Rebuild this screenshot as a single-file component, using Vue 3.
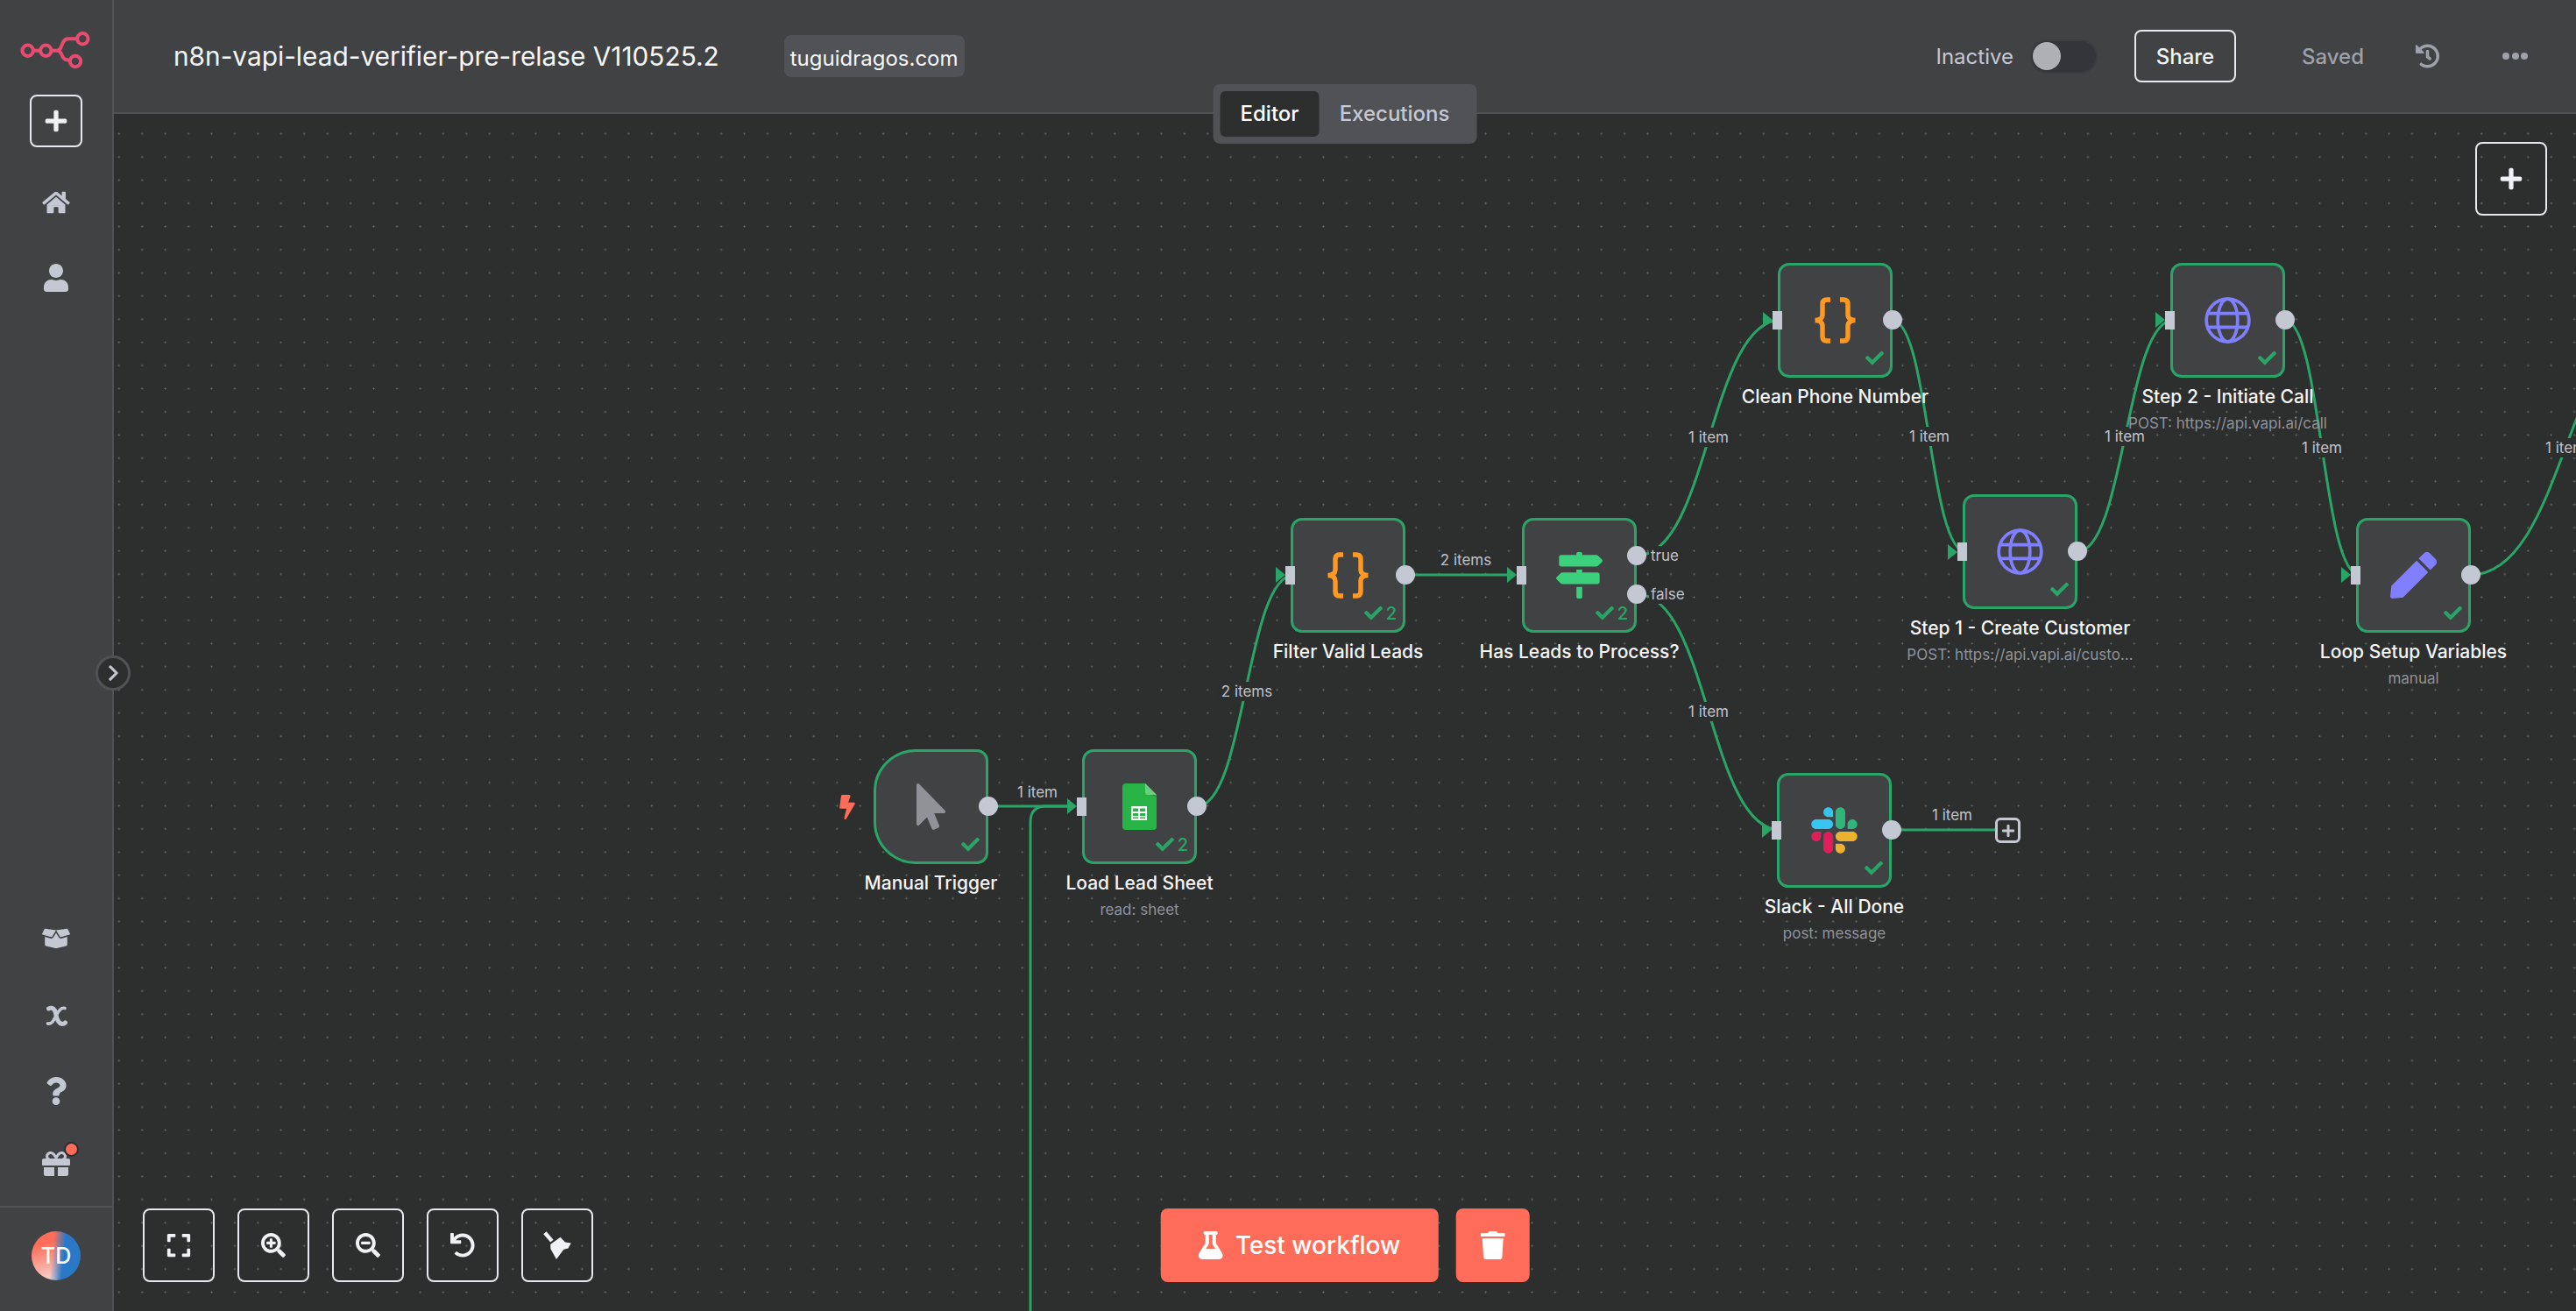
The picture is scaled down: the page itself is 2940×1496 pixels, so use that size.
<script setup>
import { h } from 'vue'

// font awesome solid paths, the broom is redrawn to match the tidy up button
const fa = {
  plus: ['0 0 448 512', 'M416 208H272V64c0-17.67-14.33-32-32-32h-32c-17.67 0-32 14.33-32 32v144H32c-17.67 0-32 14.33-32 32v32c0 17.67 14.33 32 32 32h144v144c0 17.67 14.33 32 32 32h32c17.67 0 32-14.33 32-32V304h144c17.67 0 32-14.33 32-32v-32c0-17.67-14.33-32-32-32z'],
  home: ['0 0 576 512', 'M280.37 148.26L96 300.11V464a16 16 0 0 0 16 16l112.06-.29a16 16 0 0 0 15.92-16V368a16 16 0 0 1 16-16h64a16 16 0 0 1 16 16v95.64a16 16 0 0 0 16 16.05L464 480a16 16 0 0 0 16-16V300L295.67 148.26a12.19 12.19 0 0 0-15.3 0zM571.6 251.47L488 182.56V44.05a12 12 0 0 0-12-12h-56a12 12 0 0 0-12 12v72.61L318.47 43a48 48 0 0 0-61 0L4.34 251.47a12 12 0 0 0-1.6 16.9l25.5 31A12 12 0 0 0 45.15 301l235.22-193.74a12.19 12.19 0 0 1 15.3 0L530.9 301a12 12 0 0 0 16.9-1.6l25.5-31a12 12 0 0 0-1.7-16.93z'],
  user: ['0 0 448 512', 'M224 256c70.7 0 128-57.3 128-128S294.7 0 224 0 96 57.3 96 128s57.3 128 128 128zm89.6 32h-16.7c-22.2 10.2-46.9 16-72.9 16s-50.6-5.8-72.9-16h-16.7C60.2 288 0 348.2 0 422.4V464c0 26.5 21.5 48 48 48h352c26.5 0 48-21.5 48-48v-41.6c0-74.2-60.2-134.4-134.4-134.4z'],
  box: ['0 0 640 512', 'M425.7 256c-16.9 0-32.8-9-41.4-23.4L320 126l-64.2 106.6c-8.7 14.5-24.6 23.5-41.5 23.5-4.5 0-9-.6-13.3-1.9L64 215v178c0 14.7 10 27.5 24.2 31l216.2 54.1c10.2 2.5 20.9 2.5 31 0L551.8 424c14.2-3.6 24.2-16.4 24.2-31V215l-137 39.1c-4.3 1.3-8.8 1.9-13.3 1.9zm212.6-112.2L586.8 41c-3.1-6.2-9.8-9.8-16.7-8.9L320 64l91.7 152.1c3.8 6.3 11.4 9.3 18.5 7.3l197.9-56.5c9.9-2.9 14.7-13.9 10.2-23.1zM53.2 41L1.7 143.8c-4.6 9.2.3 20.2 10.1 23l197.9 56.5c7.1 2 14.7-1 18.5-7.3L320 64 69.8 32.1c-6.9-.8-13.5 2.7-16.6 8.9z'],
  question: ['0 0 384 512', 'M202.021 0C122.202 0 70.503 32.703 29.914 91.026c-7.363 10.58-5.093 25.086 5.178 32.874l43.138 32.709c10.373 7.865 25.132 6.026 33.253-4.148 25.049-31.381 43.63-49.449 82.757-49.449 30.764 0 68.816 19.799 68.816 49.631 0 22.552-18.617 34.134-48.993 51.164-35.423 19.86-82.299 44.576-82.299 106.405V320c0 13.255 10.745 24 24 24h72.471c13.255 0 24-10.745 24-24v-5.773c0-42.86 125.268-44.645 125.268-160.627C377.504 66.256 286.902 0 202.021 0zM192 373.459c-38.196 0-69.271 31.075-69.271 69.271 0 38.195 31.075 69.27 69.271 69.27s69.271-31.075 69.271-69.271-31.075-69.27-69.271-69.27z'],
  gift: ['0 0 512 512', 'M32 448c0 17.7 14.3 32 32 32h160V320H32v128zm256 32h160c17.7 0 32-14.3 32-32V320H288v160zm192-320h-42.1c6.2-12.1 10.1-25.5 10.1-40 0-48.5-39.5-88-88-88-41.6 0-68.5 21.3-103 68.3-34.5-47-61.4-68.3-103-68.3-48.5 0-88 39.5-88 88 0 14.5 3.8 27.9 10.1 40H32c-17.7 0-32 14.3-32 32v80c0 8.8 7.2 16 16 16h480c8.8 0 16-7.2 16-16v-80c0-17.7-14.3-32-32-32zm-326.1 0c-22.1 0-40-17.9-40-40s17.9-40 40-40c19.9 0 34.6 3.3 86.1 80h-86.1zm206.1 0h-86.1c51.4-76.5 65.7-80 86.1-80 22.1 0 40 17.9 40 40s-17.9 40-40 40z'],
  expand: ['0 0 448 512', 'M0 180V56c0-13.3 10.7-24 24-24h124c6.6 0 12 5.4 12 12v40c0 6.6-5.4 12-12 12H64v84c0 6.6-5.4 12-12 12H12c-6.6 0-12-5.4-12-12zM288 44v40c0 6.6 5.4 12 12 12h84v84c0 6.6 5.4 12 12 12h40c6.6 0 12-5.4 12-12V56c0-13.3-10.7-24-24-24H300c-6.6 0-12 5.4-12 12zm148 276h-40c-6.6 0-12 5.4-12 12v84h-84c-6.6 0-12 5.4-12 12v40c0 6.6 5.4 12 12 12h124c13.3 0 24-10.7 24-24V332c0-6.6-5.4-12-12-12zM160 468v-40c0-6.6-5.4-12-12-12H64v-84c0-6.6-5.4-12-12-12H12c-6.6 0-12 5.4-12 12v124c0 13.3 10.7 24 24 24h124c6.6 0 12-5.4 12-12z'],
  zoomIn: ['0 0 512 512', 'M304 192v32c0 6.6-5.4 12-12 12h-56v56c0 6.6-5.4 12-12 12h-32c-6.6 0-12-5.4-12-12v-56h-56c-6.6 0-12-5.4-12-12v-32c0-6.6 5.4-12 12-12h56v-56c0-6.6 5.4-12 12-12h32c6.6 0 12 5.4 12 12v56h56c6.6 0 12 5.4 12 12zm201 284.7L476.7 505c-9.4 9.4-24.6 9.4-33.9 0L343 405.3c-4.5-4.5-7-10.6-7-17V372c-35.3 27.6-79.7 44-128 44C93.1 416 0 322.9 0 208S93.1 0 208 0s208 93.1 208 208c0 48.3-16.4 92.7-44 128h16.3c6.4 0 12.5 2.5 17 7l99.7 99.7c9.3 9.4 9.3 24.6 0 34zM344 208c0-75.2-60.8-136-136-136S72 132.8 72 208s60.8 136 136 136 136-60.8 136-136z'],
  zoomOut: ['0 0 512 512', 'M304 192v32c0 6.6-5.4 12-12 12H124c-6.6 0-12-5.4-12-12v-32c0-6.6 5.4-12 12-12h168c6.6 0 12 5.4 12 12zm201 284.7L476.7 505c-9.4 9.4-24.6 9.4-33.9 0L343 405.3c-4.5-4.5-7-10.6-7-17V372c-35.3 27.6-79.7 44-128 44C93.1 416 0 322.9 0 208S93.1 0 208 0s208 93.1 208 208c0 48.3-16.4 92.7-44 128h16.3c6.4 0 12.5 2.5 17 7l99.7 99.7c9.3 9.4 9.3 24.6 0 34zM344 208c0-75.2-60.8-136-136-136S72 132.8 72 208s60.8 136 136 136 136-60.8 136-136z'],
  undo: ['0 0 512 512', 'M212.333 224.333H12c-6.627 0-12-5.373-12-12V12C0 5.373 5.373 0 12 0h48c6.627 0 12 5.373 12 12v78.112C117.773 39.279 184.26 7.47 258.175 8.007c136.906.994 246.448 111.623 246.157 248.532C504.041 393.258 393.12 504 256.333 504c-64.089 0-122.496-24.313-166.51-64.215-5.099-4.622-5.334-12.554-.467-17.42l33.967-33.967c4.474-4.474 11.662-4.717 16.401-.525C170.76 415.336 211.58 432 256.333 432c97.268 0 176-78.716 176-176 0-97.267-78.716-176-176-176-58.496 0-110.28 28.476-142.274 72.333h98.274c6.627 0 12 5.373 12 12v48c0 6.627-5.373 12-12 12z'],
  broom: ['28 28 36 36', 'M30.2 33.2L33.6 30.2L41.6 39.8L38.2 42.6ZM38.2 45L49.6 36.8L55 42.6L61.8 43.4L58.4 49.4L53.4 50.8L45 62L38.4 50Z'],
  flask: ['0 0 448 512', 'M437.2 403.5L320 215V64h8c13.3 0 24-10.7 24-24V24c0-13.3-10.7-24-24-24H120c-13.3 0-24 10.7-24 24v16c0 13.3 10.7 24 24 24h8v151L10.8 403.5C-18.5 450.6 15.3 512 70.9 512h306.2c55.7 0 89.4-61.5 60.1-108.5zM137.9 320l48.2-77.6c3.7-5.2 5.8-11.6 5.8-18.4V64h64v160c0 6.9 2.2 13.2 5.8 18.4l48.2 77.6h-172z'],
  trash: ['0 0 448 512', 'M432 32H312l-9.4-18.7A24 24 0 0 0 281.1 0H166.8a23.72 23.72 0 0 0-21.4 13.3L136 32H16A16 16 0 0 0 0 48v32a16 16 0 0 0 16 16h416a16 16 0 0 0 16-16V48a16 16 0 0 0-16-16zM53.2 467a48 48 0 0 0 47.9 45h245.8a48 48 0 0 0 47.9-45L416 128H32z'],
  bolt: ['0 0 320 512', 'M296 160H180.6l42.6-129.8C227.2 15 215.7 0 200 0H56C44 0 33.8 8.9 32.2 20.8l-32 240C-1.7 275.2 9.5 288 24 288h118.7L96.6 482.5c-3.6 15.2 8 29.5 23.3 29.5 8.4 0 16.4-4.4 20.8-12l176-304c9.3-15.9-2.2-36-20.7-36z'],
  pointer: ['0 0 320 512', 'M302.189 329.126H196.105l55.831 135.993c3.889 9.428-.555 19.999-9.444 23.999l-49.165 21.427c-9.165 4-19.443-.571-23.332-9.714l-53.053-129.136-86.664 89.138C18.729 472.71 0 463.554 0 447.977V18.299C0 1.899 19.921-6.096 30.277 5.443l284.412 292.542c11.472 11.179 3.007 31.141-12.5 31.141z'],
  check: ['0 0 512 512', 'M173.898 439.404l-166.4-166.4c-9.997-9.997-9.997-26.206 0-36.204l36.203-36.204c9.997-9.998 26.207-9.998 36.204 0L192 312.69 432.095 72.596c9.997-9.997 26.207-9.997 36.204 0l36.203 36.204c9.997 9.997 9.997 26.206 0 36.204l-294.4 294.401c-9.998 9.997-26.207 9.997-36.204-.001z'],
  pen: ['0 0 512 512', 'M290.74 93.24l128.02 128.02-277.99 277.99-114.14 12.6C11.35 513.54-1.56 500.62.14 485.34l12.7-114.22 277.9-277.88zm207.2-19.06l-60.11-60.11c-18.75-18.75-49.16-18.75-67.91 0l-56.55 56.55 128.02 128.02 56.55-56.55c18.75-18.76 18.75-49.16 0-67.91z'],
  signs: ['0 0 512 512', 'M507.31 84.69L464 41.37c-6-6-14.14-9.37-22.63-9.37H288V16c0-8.84-7.16-16-16-16h-32c-8.84 0-16 7.16-16 16v16H56c-13.25 0-24 10.75-24 24v80c0 13.25 10.75 24 24 24h385.37c8.49 0 16.62-3.37 22.63-9.37l43.31-43.31c6.25-6.26 6.25-16.38 0-22.63zM224 496c0 8.84 7.16 16 16 16h32c8.84 0 16-7.16 16-16V384h-64v112zm232-272H288v-32h-64v32H70.63c-8.49 0-16.62 3.37-22.63 9.37L4.69 276.69c-6.25 6.25-6.25 16.38 0 22.63L48 342.63c6 6 14.14 9.37 22.63 9.37H456c13.25 0 24-10.75 24-24v-80c0-13.25-10.75-24-24-24z'],
  history: ['0 0 512 512', 'M504 255.531c.253 136.64-111.18 248.372-247.82 248.468-59.015.042-113.223-20.53-155.822-54.911-11.077-8.94-11.905-25.541-1.839-35.607l11.267-11.267c8.609-8.609 22.353-9.551 31.891-1.984C173.062 425.135 212.781 440 256 440c101.705 0 184-82.311 184-184 0-101.705-82.311-184-184-184-48.814 0-93.149 18.969-126.068 49.932l50.754 50.754c10.08 10.08 2.941 27.314-11.313 27.314H24c-8.837 0-16-7.163-16-16V38.627c0-14.254 17.234-21.393 27.314-11.314l49.372 49.372C129.209 34.136 189.552 8 256 8c136.81 0 247.747 110.78 248 247.531zm-180.912 78.784l9.823-12.63c8.138-10.463 6.253-25.542-4.21-33.679L288 256.349V152c0-13.255-10.745-24-24-24h-16c-13.255 0-24 10.745-24 24v135.651l65.409 50.874c10.463 8.137 25.541 6.253 33.679-4.21z']
}

const Icon = (props) => h('svg', { viewBox: fa[props.name][0] }, [h('path', { d: fa[props.name][1], fill: 'currentColor' })])
Icon.props = ['name']

const zoomTools = ['expand', 'zoomIn', 'zoomOut', 'undo', 'broom']

// all graph coordinates are page pixels, the canvas starts at 130,130
const ORIGIN = 130
const at = (x, y) => ({ left: `${x - ORIGIN}px`, top: `${y - ORIGIN}px` })

const nodes = [
  { name: 'Manual Trigger', x: 997, y: 855, icon: 'pointer', trigger: true, noInput: true },
  { name: 'Load Lead Sheet', sub: 'read: sheet', x: 1235, y: 855, icon: 'sheets', count: 2 },
  { name: 'Filter Valid Leads', x: 1473, y: 591, icon: 'code', count: 2 },
  { name: 'Has Leads to Process?', x: 1737, y: 591, icon: 'signs', count: 2, outputs: [{ top: 29, label: 'true' }, { top: 73, label: 'false' }] },
  { name: 'Clean Phone Number', x: 2029, y: 300, icon: 'code' },
  { name: 'Step 1 - Create Customer', sub: 'POST: https://api.vapi.ai/custo...', x: 2240, y: 564, icon: 'globe' },
  { name: 'Step 2 - Initiate Call', sub: 'POST: https://api.vapi.ai/call', x: 2477, y: 300, icon: 'globe' },
  { name: 'Loop Setup Variables', sub: 'manual', x: 2689, y: 591, icon: 'pen' },
  { name: 'Slack - All Done', sub: 'post: message', x: 2028, y: 882, icon: 'slack' }
]

const curve = (x1, y1, x2, y2) => {
  const d = (x2 - x1) / 2
  return `M${x1} ${y1}C${x1 + d} ${y1} ${x2 - d} ${y2} ${x2} ${y2}`
}

const edges = [
  'M1128 920H1220',
  curve(1366, 920, 1477, 656),
  'M1604 656H1722',
  curve(1868, 634, 2033, 365),
  curve(1868, 678, 2032, 947),
  curve(2159, 365, 2244, 630),
  curve(2370, 630, 2481, 365),
  curve(2607, 365, 2693, 656),
  curve(2819, 656, 3037, 366),
  'M2159 947H2277',
  'M1176 1496V938Q1176 920 1194 920H1220'
]

// arrow tips sit against the input ports
const arrows = [[1229, 920], [1467, 656], [1731, 656], [2023, 365], [2234, 630], [2471, 365], [2683, 656], [2022, 947]]

const edgeLabels = [
  { text: '1 item', x: 1184, y: 904 },
  { text: '2 items', x: 1423, y: 789, cover: true },
  { text: '2 items', x: 1673, y: 639 },
  { text: '1 item', x: 1950, y: 499, cover: true },
  { text: '1 item', x: 1950, y: 812, cover: true },
  { text: '1 item', x: 2202, y: 498, cover: true },
  { text: '1 item', x: 2425, y: 498, cover: true },
  { text: '1 item', x: 2650, y: 511, cover: true },
  { text: '1 item', x: 2928, y: 511, cover: true },
  { text: '1 item', x: 2228, y: 930 }
]
</script>

<template>
  <div class="app">
    <aside class="sidebar">
      <svg class="logo" viewBox="0 0 86 52" fill="none" stroke="#ea4b71" stroke-width="4">
        <circle cx="10.7" cy="26.7" r="6.2" />
        <circle cx="31.3" cy="26.7" r="6.2" />
        <circle cx="73.3" cy="13.3" r="6.2" />
        <circle cx="65" cy="39" r="6.2" />
        <path d="M17 26.7H25M37.5 26.7H44C51 26.7 48 13.3 57 13.3H67M44 26.7C51 26.7 48 35 54 37L59 38" />
      </svg>
      <button class="tool side-plus"><Icon name="plus" class="icon-plus" /></button>
      <a class="nav-item"><Icon name="home" class="icon-home" /></a>
      <a class="nav-item"><Icon name="user" class="icon-user" /></a>

      <div class="side-bottom">
        <a class="nav-item"><Icon name="box" class="icon-box" /></a>
        <a class="nav-item">
          <svg class="icon-var" viewBox="0 0 26 26" fill="none" stroke="currentColor" stroke-linecap="round">
            <path stroke-width="5" d="M4.5 5C9 3 11.5 5.5 12.5 10C13.5 16 15 22 20 22.5C21.5 22.5 22.5 22 23.5 21" />
            <path stroke-width="3.6" d="M23 4.5C19 3 16 7 13 13C10 19 8 23 3.5 22" />
          </svg>
        </a>
        <a class="nav-item"><Icon name="question" class="icon-help" /></a>
        <a class="nav-item gift">
          <Icon name="gift" class="icon-gift" />
          <span class="gift-dot"></span>
        </a>
      </div>
      <div class="side-user">
        <span class="avatar">TD</span>
      </div>

      <button class="collapse">
        <svg viewBox="0 0 12 20" fill="none" stroke="currentColor" stroke-width="3.4" stroke-linecap="round" stroke-linejoin="round"><path d="M2 2L10 10L2 18" /></svg>
      </button>
    </aside>

    <main class="main">
      <header class="header">
        <span class="title">n8n-vapi-lead-verifier-pre-relase V110525.2</span>
        <span class="tag">tuguidragos.com</span>
        <div class="header-right">
          <span class="state">Inactive</span>
          <span class="switch"><span class="thumb"></span></span>
          <button class="share">Share</button>
          <span class="saved">Saved</span>
          <Icon name="history" class="icon-history" />
          <span class="more"><i></i><i></i><i></i></span>
        </div>
      </header>

      <div class="tabs">
        <span class="tab active">Editor</span>
        <span class="tab">Executions</span>
      </div>

      <section class="canvas">
        <svg class="edges" viewBox="130 130 2810 1366">
          <path v-for="(d, i) in edges" :key="i" :d="d" />
          <polygon v-for="([x, y], i) in arrows" :key="i" :points="`${x},${y} ${x - 11},${y - 9} ${x - 11},${y + 9}`" />
        </svg>

        <span
          v-for="(label, i) in edgeLabels"
          :key="i"
          class="edge-label"
          :class="{ cover: label.cover }"
          :style="at(label.x, label.y)"
        >{{ label.text }}</span>

        <div v-for="node in nodes" :key="node.name" class="node" :style="at(node.x, node.y)">
          <div class="node-box" :class="{ trigger: node.trigger }">
            <Icon v-if="node.icon === 'pointer'" name="pointer" class="icon-pointer" />
            <Icon v-else-if="node.icon === 'signs'" name="signs" class="icon-signs" />
            <Icon v-else-if="node.icon === 'pen'" name="pen" class="icon-pen" />
            <svg v-else-if="node.icon === 'sheets'" class="icon-sheets" viewBox="0 0 39 53">
              <path d="M4 0H26L39 13V49A4 4 0 0 1 35 53H4A4 4 0 0 1 0 49V4A4 4 0 0 1 4 0Z" fill="#28b446" />
              <path d="M26 0L39 13V16L28 12Z" fill="#249a3f" />
              <path d="M26 0L39 13H29A3 3 0 0 1 26 10Z" fill="#6ccf7e" />
              <path d="M10 26H28V42H10Z" fill="#fff" />
              <path d="M12 28.5H18V32H12ZM20 28.5H26V32H20ZM12 34H18V37H12ZM20 34H26V37H20ZM12 38.5H18V40H12ZM20 38.5H26V40H20Z" fill="#28b446" />
            </svg>
            <svg v-else-if="node.icon === 'code'" class="icon-code" viewBox="0 0 51 53" fill="none" stroke="#ff9922" stroke-width="5.4">
              <path d="M20 3H16C12.5 3 11 5 11 8V20C11 24 8 26.5 2.5 26.5C8 26.5 11 29 11 33V45C11 48 12.5 50 16 50H20" />
              <path d="M31 3H35C38.5 3 40 5 40 8V20C40 24 43 26.5 48.5 26.5C43 26.5 40 29 40 33V45C40 48 38.5 50 35 50H31" />
            </svg>
            <svg v-else-if="node.icon === 'globe'" class="icon-globe" viewBox="0 0 54 54" fill="none" stroke="#8080ff" stroke-width="3.8">
              <circle cx="27" cy="27" r="24.8" />
              <ellipse cx="27" cy="27" rx="11.5" ry="24.8" />
              <path d="M4 19H50M4 35H50" />
            </svg>
            <svg v-else-if="node.icon === 'slack'" class="icon-slack" viewBox="0 0 127 127">
              <path d="M27.2 80c0 7.3-5.9 13.2-13.2 13.2C6.7 93.2.8 87.3.8 80c0-7.3 5.9-13.2 13.2-13.2h13.2V80zm6.6 0c0-7.3 5.9-13.2 13.2-13.2 7.3 0 13.2 5.9 13.2 13.2v33c0 7.3-5.9 13.2-13.2 13.2-7.3 0-13.2-5.9-13.2-13.2V80z" fill="#e01e5a" />
              <path d="M47 27c-7.3 0-13.2-5.9-13.2-13.2C33.8 6.5 39.7.6 47 .6c7.3 0 13.2 5.9 13.2 13.2V27H47zm0 6.7c7.3 0 13.2 5.9 13.2 13.2 0 7.3-5.9 13.2-13.2 13.2H13.9C6.6 60.1.7 54.2.7 46.9c0-7.3 5.9-13.2 13.2-13.2H47z" fill="#36c5f0" />
              <path d="M99.9 46.9c0-7.3 5.9-13.2 13.2-13.2 7.3 0 13.2 5.9 13.2 13.2 0 7.3-5.9 13.2-13.2 13.2H99.9V46.9zm-6.6 0c0 7.3-5.9 13.2-13.2 13.2-7.3 0-13.2-5.9-13.2-13.2V13.8C66.9 6.5 72.8.6 80.1.6c7.3 0 13.2 5.9 13.2 13.2v33.1z" fill="#2eb67d" />
              <path d="M80.1 99.8c7.3 0 13.2 5.9 13.2 13.2 0 7.3-5.9 13.2-13.2 13.2-7.3 0-13.2-5.9-13.2-13.2V99.8h13.2zm0-6.6c-7.3 0-13.2-5.9-13.2-13.2 0-7.3 5.9-13.2 13.2-13.2h33.1c7.3 0 13.2 5.9 13.2 13.2 0 7.3-5.9 13.2-13.2 13.2H80.1z" fill="#ecb22e" />
            </svg>

            <span class="status">
              <Icon name="check" class="icon-check" />
              <span v-if="node.count">{{ node.count }}</span>
            </span>

            <Icon v-if="node.trigger" name="bolt" class="icon-bolt" />
            <span v-if="!node.noInput" class="port-in"></span>
            <template v-if="node.outputs">
              <span v-for="out in node.outputs" :key="out.label" class="port-out" :style="{ top: `${out.top}px` }">
                <span class="port-label">{{ out.label }}</span>
              </span>
            </template>
            <span v-else class="port-out"></span>
          </div>
          <div class="node-name">{{ node.name }}</div>
          <div v-if="node.sub" class="node-sub">{{ node.sub }}</div>
        </div>

        <span class="add-node" :style="at(2277, 933)">
          <Icon name="plus" />
        </span>

        <button class="tool add-main"><Icon name="plus" class="icon-plus" /></button>

        <div class="zoom-tools">
          <button v-for="tool in zoomTools" :key="tool" class="tool">
            <Icon :name="tool" :class="tool === 'broom' ? 'tool-broom' : 'tool-icon'" />
          </button>
        </div>

        <div class="run-bar">
          <button class="run"><Icon name="flask" class="icon-run" />Test workflow</button>
          <button class="run run-trash"><Icon name="trash" class="icon-run" /></button>
        </div>
      </section>
    </main>
  </div>
</template>

<style>
body {
  margin: 0;
  background: #2d2e2e;
}
</style>

<style scoped>
.app {
  display: flex;
  width: 2940px;
  height: 1496px;
  overflow: hidden;
  font-family: Inter, "Noto Sans", sans-serif;
  color: #fff;
}

button {
  font-family: inherit;
  cursor: pointer;
}

.sidebar {
  position: relative;
  z-index: 3;
  flex: 0 0 128px;
  display: flex;
  flex-direction: column;
  align-items: center;
  background: #414244;
  border-right: 2px solid #515255;
  color: #c4c8d3;
}

.logo {
  width: 86px;
  height: 52px;
  margin: 31px 0 25px;
}

.tool {
  display: flex;
  align-items: center;
  justify-content: center;
  padding: 0;
  background: transparent;
  border: 2px solid #e6e9ef;
  border-radius: 8px;
  color: #f0f2f6;
}

.side-plus {
  width: 60px;
  height: 60px;
  flex: none;
  margin-bottom: 20px;
}

.icon-plus {
  width: 26px;
  height: 28px;
}

.nav-item {
  position: relative;
  height: 86px;
  width: 100%;
  display: flex;
  align-items: center;
  justify-content: center;
  flex: none;
}

.icon-home {
  width: 32px;
  height: 28px;
}

.icon-user {
  width: 28px;
  height: 32px;
}

.side-bottom {
  margin-top: auto;
  width: 100%;
  padding-bottom: 5px;
}

.icon-box {
  width: 32px;
  height: 26px;
  margin-top: 2px;
}

.icon-var {
  width: 26px;
  height: 26px;
  margin-top: 6px;
}

.icon-help {
  width: 24px;
  height: 32px;
  margin-top: 6px;
}

.icon-gift {
  width: 32px;
  height: 32px;
}

.gift-dot {
  position: absolute;
  left: 75px;
  top: 20px;
  width: 13px;
  height: 13px;
  border-radius: 50%;
  background: #ff6d5a;
  box-shadow: 0 0 0 2px #2d2e2e;
}

.side-user {
  height: 120px;
  width: 100%;
  box-sizing: border-box;
  padding-bottom: 8px;
  border-top: 2px solid #515255;
  display: flex;
  align-items: center;
  justify-content: center;
}

.avatar {
  width: 56px;
  height: 56px;
  border-radius: 50%;
  display: flex;
  align-items: center;
  justify-content: center;
  color: #fff;
  font-size: 25px;
  font-weight: 500;
  background:
    linear-gradient(96deg, transparent 42%, #2a78c8 64%),
    linear-gradient(165deg, #ff6d5a 25%, #f7d0cb 85%);
}

.collapse {
  position: absolute;
  top: 748px;
  right: -21px;
  width: 40px;
  height: 40px;
  padding: 0;
  display: flex;
  align-items: center;
  justify-content: center;
  background: #2d2e2e;
  border: 3px solid #515255;
  border-radius: 50%;
  color: #c4c8d3;
}

.collapse svg {
  width: 11px;
  height: 18px;
}

.main {
  position: relative;
  flex: 1;
  min-width: 0;
  display: flex;
  flex-direction: column;
}

.header {
  flex: 0 0 128px;
  display: flex;
  align-items: center;
  padding: 0 55px 0 68px;
  background: #414244;
  border-bottom: 2px solid #515255;
}

.title {
  font-size: 29.8px;
  color: #f5f6f8;
}

.tag {
  margin-left: 74px;
  padding: 0 7px;
  height: 48px;
  line-height: 54px;
  border-radius: 8px;
  background: #515255;
  font-size: 24px;
  color: #f5f6f8;
}

.header-right {
  margin-left: auto;
  display: flex;
  align-items: center;
}

.state {
  font-size: 24px;
  color: #c4c8d3;
}

.switch {
  box-sizing: border-box;
  margin: 0 42px 0 19px;
  width: 77px;
  height: 39px;
  padding: 0 1px;
  display: flex;
  align-items: center;
  border: 2px solid #3b3c3f;
  border-radius: 20px;
  background: #34353a;
}

.thumb {
  width: 32px;
  height: 32px;
  border-radius: 50%;
  background: #aeb0b4;
}

.share {
  width: 116px;
  height: 60px;
  padding: 0;
  background: transparent;
  border: 2px solid #e6e9ef;
  border-radius: 8px;
  color: #f0f2f6;
  font-size: 24px;
  font-weight: 500;
}

.saved {
  margin-left: 75px;
  font-size: 24px;
  font-weight: 500;
  color: #9da1aa;
}

.icon-history {
  width: 29px;
  height: 28px;
  margin-left: 58px;
  color: #9da1aa;
}

.more {
  margin-left: 71px;
  width: 29px;
  display: flex;
  justify-content: space-between;
}

.more i {
  width: 8px;
  height: 8px;
  border-radius: 50%;
  background: #9da1aa;
}

.tabs {
  position: absolute;
  z-index: 2;
  top: 96px;
  left: 50%;
  transform: translateX(-50%);
  display: flex;
  padding: 8px;
  border-radius: 8px;
  background: #515255;
}

.tab {
  height: 52px;
  line-height: 52px;
  padding: 0 23px;
  border-radius: 6px;
  font-size: 24px;
  font-weight: 500;
  color: #c4c8d3;
}

.tab.active {
  background: #2d2e2e;
  color: #fff;
}

.canvas {
  position: relative;
  flex: 1;
  min-height: 0;
  overflow: hidden;
  background-color: #2d2e2e;
  background-image: radial-gradient(circle, #686969 0.8px, transparent 1.3px);
  background-size: 26.44px 26.44px;
  background-position: -139.7px -122.7px;
}

.edges {
  position: absolute;
  inset: 0;
  width: 100%;
  height: 100%;
}

.edges path {
  fill: none;
  stroke: #29a568;
  stroke-width: 3;
}

.edges polygon {
  fill: #29a568;
}

.edge-label {
  position: absolute;
  transform: translate(-50%, -50%);
  padding: 0 2px;
  font-size: 17px;
  line-height: 22px;
  color: #bfc3cc;
  white-space: nowrap;
}

.edge-label.cover {
  background: #2d2e2e;
}

.node {
  position: absolute;
  width: 131px;
}

.node-box {
  position: relative;
  width: 131px;
  height: 131px;
  box-sizing: border-box;
  display: flex;
  align-items: center;
  justify-content: center;
  background: #414244;
  border: 3px solid #29a568;
  border-radius: 13px;
}

.node-box.trigger {
  border-radius: 48px 13px 13px 48px;
}

.icon-pointer {
  width: 33px;
  height: 53px;
  color: #909298;
}

.icon-signs,
.icon-globe,
.icon-code,
.icon-slack,
.icon-pen {
  width: 53px;
  height: 53px;
}

.icon-signs {
  color: #3ad07c;
}

.icon-pen {
  color: #8080ff;
}

.icon-sheets {
  width: 39px;
  height: 53px;
}

.status {
  position: absolute;
  right: 7px;
  bottom: 9px;
  display: flex;
  align-items: center;
  gap: 4px;
  color: #29a568;
  font-size: 20px;
  line-height: 20px;
  font-weight: 500;
}

.icon-check {
  width: 21px;
  height: 21px;
}

.icon-bolt {
  position: absolute;
  left: -42px;
  top: 49px;
  width: 18px;
  height: 28px;
  color: #ff6d5a;
}

.port-in {
  position: absolute;
  left: -9px;
  top: 52px;
  width: 11px;
  height: 21px;
  background: #c4c8d3;
}

.port-out {
  position: absolute;
  right: -14px;
  top: 51px;
  width: 22px;
  height: 22px;
  border-radius: 50%;
  background: #c4c8d3;
}

.port-out .port-label {
  position: absolute;
  left: 25px;
  top: 0;
  padding-left: 2px;
  padding-right: 2px;
  font-size: 17px;
  line-height: 22px;
  color: #bfc3cc;
  background: #2d2e2e;
}

.node-name {
  position: absolute;
  top: 139px;
  left: 50%;
  transform: translateX(-50%);
  white-space: nowrap;
  font-size: 21px;
  line-height: 28px;
  font-weight: 500;
  color: #f5f6f8;
}

.node-sub {
  position: absolute;
  top: 171px;
  left: 50%;
  transform: translateX(-50%);
  white-space: nowrap;
  font-size: 17px;
  line-height: 24px;
  color: #8f939b;
}

.add-node {
  position: absolute;
  box-sizing: border-box;
  width: 29px;
  height: 29px;
  display: flex;
  align-items: center;
  justify-content: center;
  border: 3px solid #c4c8d3;
  border-radius: 6px;
  color: #c4c8d3;
  background: #2d2e2e;
}

.add-node svg {
  width: 14px;
  height: 16px;
}

.add-main {
  position: absolute;
  top: 32px;
  right: 33px;
  width: 82px;
  height: 84px;
}

.zoom-tools {
  position: absolute;
  left: 33px;
  bottom: 33px;
  display: flex;
  gap: 26px;
}

.zoom-tools .tool {
  width: 82px;
  height: 84px;
}

.tool-icon {
  width: 28px;
  height: 30px;
}

.tool-broom {
  width: 36px;
  height: 36px;
}

.run-bar {
  position: absolute;
  left: 50%;
  bottom: 33px;
  transform: translateX(-50%);
  display: flex;
  gap: 20px;
}

.run {
  height: 84px;
  padding: 0 43px;
  display: flex;
  align-items: center;
  gap: 14px;
  border: 0;
  border-radius: 8px;
  background: #ff6d5a;
  color: #fff;
  font-size: 28px;
  font-weight: 500;
}

.run-trash {
  width: 84px;
  padding: 0;
  justify-content: center;
}

.icon-run {
  width: 28px;
  height: 32px;
}
</style>
